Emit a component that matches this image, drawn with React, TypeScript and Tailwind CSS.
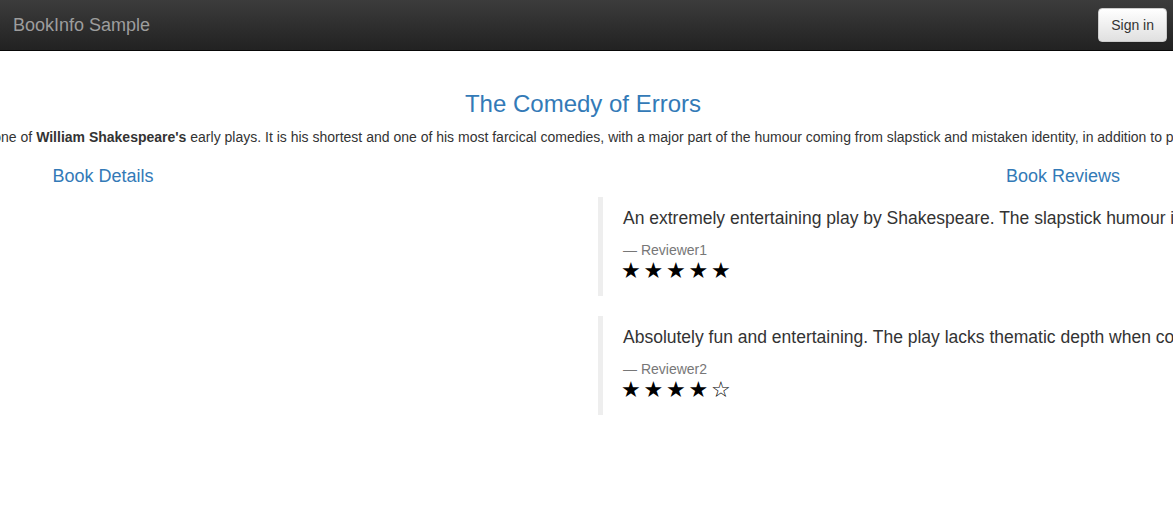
const reviews = [
  {
    text: "An extremely entertaining play by Shakespeare. The slapstick humour is refreshing!",
    reviewer: "Reviewer1",
    stars: 5,
  },
  {
    text: "Absolutely fun and entertaining. The play lacks thematic depth when compared to other plays by Shakespeare.",
    reviewer: "Reviewer2",
    stars: 4,
  },
];

const Stars = ({ count }: { count: number }) => (
  <div className="flex h-[24px] ml-[-2px] text-black text-[22px] leading-[20px] font-['DejaVu_Sans',sans-serif]">
    {[0, 1, 2, 3, 4].map((i) => (
      <span key={i} className="w-[22.5px]">
        {i < count ? "★" : "☆"}
      </span>
    ))}
  </div>
);

export default function App() {
  return (
    <div className="min-h-[506px] bg-white overflow-hidden font-['Liberation_Sans',Arial,sans-serif] text-[14px] text-[#333]">
      <nav className="h-[51px] flex items-center justify-between border-b border-[#080808] bg-gradient-to-b from-[#3c3c3c] to-[#222]">
        <span className="pl-[13px] text-[18px] text-[#9d9d9d]">BookInfo Sample</span>
        <button className="mr-[6px] h-[34px] px-[12px] rounded-[4px] border border-[#ccc] bg-gradient-to-b from-white to-[#e0e0e0] text-[14px] text-[#333] shadow-[inset_0_1px_0_rgba(255,255,255,.15),0_1px_1px_rgba(0,0,0,.075)]">
          Sign in
        </button>
      </nav>

      <div className="w-[1920px] ml-[-377px] px-[15px] pt-[40px]">
        <h3 className="text-center text-[24px] leading-[26.4px] text-[#337ab7]">The Comedy of Errors</h3>
        <p className="mt-[10px] whitespace-nowrap leading-[20px]">
          Summary: <a className="text-[#337ab7]">Wikipedia Summary</a>: The Comedy of Errors is one of{" "}
          <b>William Shakespeare's</b> early plays. It is his shortest and one of his most farcical comedies, with a
          major part of the humour coming from slapstick and mistaken identity, in addition to puns and word play.
        </p>

        <div className="grid grid-cols-2 mt-[19px] mx-[-15px]">
          <div className="px-[15px]">
            <h4 className="text-center text-[18px] leading-[20px] text-[#337ab7]">Book Details</h4>
          </div>
          <div className="px-[15px]">
            <h4 className="text-center text-[18px] leading-[20px] text-[#337ab7]">Book Reviews</h4>
            <div className="mt-[11px] flex flex-col gap-[20px]">
              {reviews.map((r) => (
                <blockquote key={r.reviewer} className="border-l-[5px] border-[#eee] px-[20px] pt-[9px] pb-[11px] text-[17.5px]">
                  <p className="leading-[25px]">{r.text}</p>
                  <div className="mt-[9px] text-[14px] leading-[20px] text-[#777]">— {r.reviewer}</div>
                  <div className="pt-[1px]">
                    <Stars count={r.stars} />
                  </div>
                </blockquote>
              ))}
            </div>
          </div>
        </div>
      </div>
    </div>
  );
}
